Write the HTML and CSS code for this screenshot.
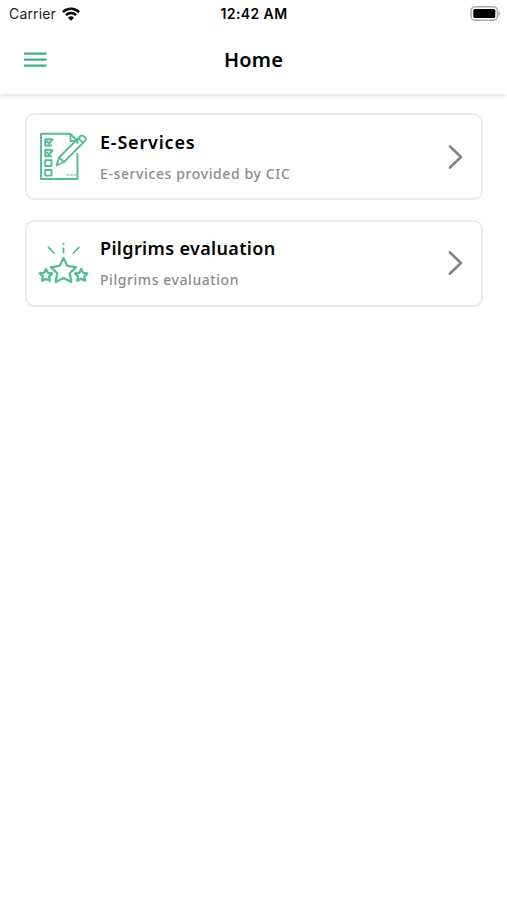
FILE: index.html
```html
<!DOCTYPE html>
<html lang="en">
<head>
<meta charset="utf-8">
<title>Home</title>
<link rel="stylesheet" href="styles.css">
</head>
<body>
<header class="top">
  <div class="status">
    <div class="carrier"><span class="carrier-name">Carrier</span>
      <svg class="wifi" width="18" height="14" viewBox="0 0 18 14" fill="none" stroke="#000" stroke-width="2.5"><path d="M.9 5.1C5.5.7 12.500.7 17.100 5.100M3.900 8.200C6.900 5.400 11.100 5.400 14.100 8.200"/><path d="M6 10.700Q9 8 12 10.700L9 13.700Z" fill="#000" stroke="none"/></svg>
    </div>
    <span class="time">12:42 AM</span>
    <svg class="battery" width="31" height="15" viewBox="0 0 31 15"><rect x="1" y=".8" width="26.500" height="13.400" rx="4" fill="#fff" stroke="#aaa" stroke-width="1.500"/><rect x="3.300" y="3" width="22" height="9" rx="1.500" fill="#000"/><path d="M28.500 5.300Q32 7.500 28.500 9.700Z" fill="#aaa"/></svg>
  </div>
  <nav class="bar">
    <svg class="menu" width="23" height="16" viewBox="0 0 23 16" stroke="#3fae8a" stroke-width="2.300"><path d="M0 1.700H22.500M0 7.700H22.500M0 13.700H22.500"/></svg>
    <h1 class="title">Home</h1>
    <span></span>
  </nav>
</header>
<main class="list">
  <a class="card">
    <svg class="icon" viewBox="39 132 50 50">
      <path d="M77.500 154V179H41V133.800H70.500L77.500 141V143M70.500 133.800V141H76"/>
      <path d="M56.500 165.500L59 157.500L80.500 136Q82 134.800 83.500 136.200L85.500 138.200Q86.500 139.500 85.300 140.700L64 162ZM59 157.500L64 162M78.300 138.200L83 143"/>
      <path d="M51.500 139.300H45.200V145.500H51.500M51.500 150H45.200V156.200H51.500M45.200 160.300H51.500V166H45.200ZM45.200 170H51.500V175.600H45.200ZM47 141.500L49 143.500L52.500 139.500M47 152.500L49 154.500L52.500 150.500"/>
      <path class="fine" d="M67 175H69M70.500 175H72.500M74 175H76"/>
    </svg>
    <div class="copy"><h2 class="name services">E-Services</h2><p class="desc provided">E-services provided by CIC</p></div>
    <svg class="chevron" width="16" height="26" viewBox="0 0 16 26"><path d="M2 2.500L13 13L2 23.500"/></svg>
  </a>
  <a class="card">
    <svg class="icon stars" viewBox="39 238.500 50 50">
      <path d="M63.500 258.500L67.300 266.300L76 267.600L69.800 273.700L71.300 282.500L63.500 278.400L55.700 282.500L57.200 273.700L51 267.600L59.700 266.300Z"/>
      <path d="M46 269.500L47.900 273.300L52.200 273.900L49.100 276.900L49.900 281.200L46 279.200L42.100 281.200L42.900 276.900L39.800 273.900L44.100 273.300ZM81.200 269.500L83.100 273.300L87.400 273.900L84.300 276.900L85.100 281.200L81.200 279.200L77.300 281.200L78.100 276.900L75 273.900L79.300 273.300Z"/>
      <path class="ray" d="M48.500 247.800L54 253.500M63.500 248.800V253M63.500 244.200V244.700M79 247.800L73.500 253.500"/>
    </svg>
    <div class="copy"><h2 class="name evaluation">Pilgrims evaluation</h2><p class="desc rating">Pilgrims evaluation</p></div>
    <svg class="chevron" width="16" height="26" viewBox="0 0 16 26"><path d="M2 2.500L13 13L2 23.500"/></svg>
  </a>
</main>
</body>
</html>
```
FILE: styles.css
```css
* { box-sizing: border-box; }
body { margin: 0; min-height: 900px; background: #fff; color: #000; font-family: "Noto Sans", sans-serif; }
.top { height: 94px; background: #fff; box-shadow: 0 1px 5px rgba(0, 0, 0, .16); }
.status { display: grid; grid-template-columns: 1fr auto 1fr; align-items: center; height: 27px; padding: 0 6px 0 9px; font-family: Inter, sans-serif; }
.carrier { display: flex; align-items: center; gap: 6px; font-size: 14px; color: #222; letter-spacing: .15px; }
.wifi { display: block; }
.time { margin-left: -2px; font-size: 14px; font-weight: 600; letter-spacing: .4px; }
.battery { justify-self: end; margin-top: -1px; }
.bar { display: grid; grid-template-columns: 1fr auto 1fr; align-items: center; height: 65px; padding: 0 24px; }
.title { margin: 0; font-size: 20px; line-height: 28px; font-weight: 600; letter-spacing: .2px; }
.list { display: flex; flex-direction: column; gap: 19.5px; padding: 19px 24.5px 0 25px; }
.card { display: flex; align-items: center; height: 87px; padding: 0 17px 0 12px; border: 2px solid #ebebeb; border-radius: 9px; }
.icon { width: 50px; height: 50px; margin-right: 11px; flex: none; overflow: visible; fill: none; stroke: #55bb98; stroke-width: 1.900; stroke-linejoin: round; stroke-linecap: round; }
.stars { stroke-width: 2.300; }
.fine { stroke-width: 1; }
.ray { stroke-width: 1.800; }
.copy { flex: 1; }
.name, .desc { margin: 0; white-space: nowrap; }
.name { font-size: 18px; line-height: 30px; font-weight: 600; }
.services { letter-spacing: .8px; }
.evaluation { letter-spacing: .35px; }
.desc { margin-top: 4px; font-size: 14px; line-height: 26px; font-weight: 500; color: #8c8c8c; }
.provided { letter-spacing: .61px; }
.rating { letter-spacing: .56px; }
.chevron { margin-right: -.5px; fill: none; stroke: #858585; stroke-width: 2.700; stroke-linecap: round; stroke-linejoin: round; }
```
